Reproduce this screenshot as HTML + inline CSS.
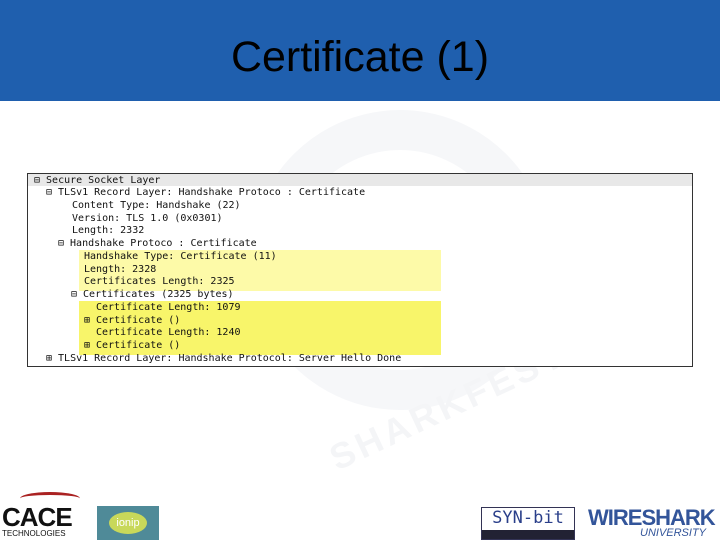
<!DOCTYPE html><html><head><style>
body{margin:0;width:720px;height:540px;background:#fff;position:relative;overflow:hidden;font-family:"Liberation Sans",sans-serif}
.hdr{position:absolute;left:0;top:0;width:720px;height:101px;background:#1f5fae}
.hdr div{position:absolute;left:0;width:720px;top:33px;text-align:center;font-size:43px;color:#000}
.wm{position:absolute;left:250px;top:110px;width:300px;height:300px;border-radius:50%;border:40px solid #f6f7f9;box-sizing:border-box}
.box{position:absolute;left:27px;top:173px;width:666px;height:194px;border:1px solid #333;background:#fff;box-sizing:border-box}
.y1{position:absolute;left:51px;top:76px;width:362px;height:41px;background:#fdfaa8}
.y2{position:absolute;left:51px;top:127px;width:362px;height:54px;background:#f8f56a}
.r{position:absolute;font-family:"DejaVu Sans Mono","Liberation Mono",monospace;font-size:10px;color:#111;white-space:pre;line-height:12px}
.top{position:absolute;left:0;top:0;width:664px;height:12px;background:#e8e8e8}
.lg{position:absolute;font-weight:bold}
</style></head><body>
<div class="hdr"><div>Certificate (1)</div></div>
<div class="wm"></div>
<div style="position:absolute;left:320px;top:385px;font-size:36px;font-weight:bold;color:#f4f5f7;transform:rotate(-25deg);letter-spacing:4px">SHARKFEST</div>
<div class="box">
<div class="top"></div>
<div class="y1"></div><div class="y2"></div>
<div class="r" style="left:6px;top:1px">⊟ Secure Socket Layer</div>
<div class="r" style="left:18px;top:13px">⊟ TLSv1 Record Layer: Handshake Protoco : Certificate</div>
<div class="r" style="left:44px;top:26px">Content Type: Handshake (22)</div>
<div class="r" style="left:44px;top:39px">Version: TLS 1.0 (0x0301)</div>
<div class="r" style="left:44px;top:51px">Length: 2332</div>
<div class="r" style="left:30px;top:64px">⊟ Handshake Protoco : Certificate</div>
<div class="r" style="left:56px;top:77px">Handshake Type: Certificate (11)</div>
<div class="r" style="left:56px;top:90px">Length: 2328</div>
<div class="r" style="left:56px;top:102px">Certificates Length: 2325</div>
<div class="r" style="left:43px;top:115px">⊟ Certificates (2325 bytes)</div>
<div class="r" style="left:68px;top:128px">Certificate Length: 1079</div>
<div class="r" style="left:56px;top:141px">⊞ Certificate ()</div>
<div class="r" style="left:68px;top:153px">Certificate Length: 1240</div>
<div class="r" style="left:56px;top:166px">⊞ Certificate ()</div>
<div class="r" style="left:18px;top:179px">⊞ TLSv1 Record Layer: Handshake Protocol: Server Hello Done</div>
</div>
<div class="lg" style="left:2px;top:502px;font-size:26px;color:#111;letter-spacing:-1px">CACE</div>
<div style="position:absolute;left:20px;top:492px;width:60px;height:10px;border-top:3px solid #a22;border-radius:50% 50% 0 0"></div>
<div style="position:absolute;left:2px;top:529px;font-size:8px;color:#111">TECHNOLOGIES</div>
<div style="position:absolute;left:97px;top:506px;width:62px;height:34px;background:#4f8a98"><div style="margin:6px 12px;width:38px;height:22px;border-radius:50%;background:#c8d85a;font-size:11px;text-align:center;line-height:22px;color:#fff">ionip</div></div>
<div style="position:absolute;left:481px;top:507px;width:94px;height:33px;border:1px solid #335;background:#fff;box-sizing:border-box"><div style="font-family:'DejaVu Sans Mono',monospace;font-size:17px;color:#2a3f8a;text-align:center">SYN-bit</div><div style="position:absolute;left:0;bottom:0;width:92px;height:9px;background:#223"></div></div>
<div class="lg" style="left:588px;top:505px;font-size:22px;color:#33559a;letter-spacing:-1px">WIRESHARK</div>
<div style="position:absolute;left:640px;top:527px;font-size:11px;font-style:italic;color:#33559a">UNIVERSITY</div>
</body></html>
